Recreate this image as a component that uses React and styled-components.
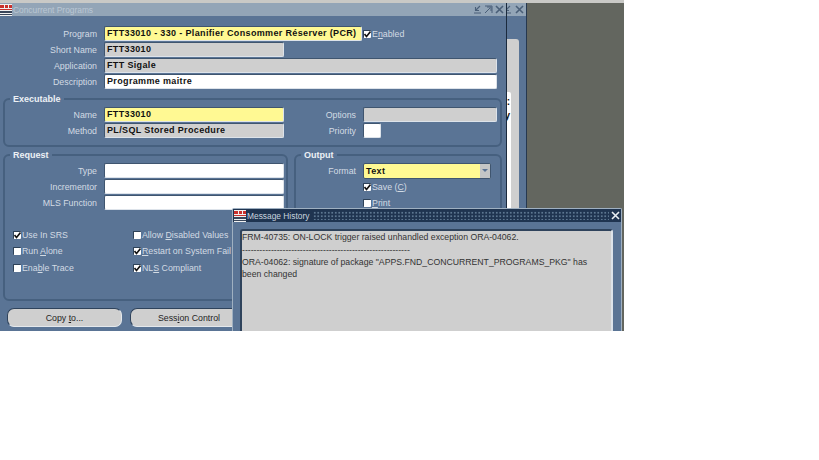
import React from 'react';
import styled, { createGlobalStyle } from 'styled-components';

const GlobalStyle = createGlobalStyle`
html, body {
  margin: 0;
  background: #FFFFFF;
}
`;

const Desktop = styled.div`
position: relative;
width: 624px;
height: 331px;
overflow: hidden;
background: #63665F;
border-top: 3px solid #C9C9C6;
box-sizing: border-box;
font-family: "Liberation Sans", Arial, sans-serif;
font-size: 8.8px;
`;

const BackWindow = styled.div`
position: absolute;
left: 0;
top: 0;
width: 527px;
height: 328px;
background: #5A7495;
border-right: 1px solid #26384F;
box-sizing: border-box;
`;

const BackTitle = styled.div`
height: 13px;
background: #93A5B7;
display: flex;
justify-content: flex-end;
align-items: center;
gap: 3px;
padding-right: 2px;
`;

const BackPanel = styled.div`
position: absolute;
left: 495px;
top: 36px;
width: 24px;
height: 292px;
background: #CFCFCF;
border-radius: 3px 3px 0 0;
`;

const BackSheet = styled.div`
position: absolute;
left: 495px;
top: 89px;
width: 16px;
height: 239px;
box-sizing: border-box;
padding: 3px 1px 0 0;
background: #FFFFFF;
border-radius: 2px;
color: #111111;
font-weight: bold;
font-size: 10px;
line-height: 14px;
text-align: right;
`;

const Window = styled.div`
position: absolute;
left: 0;
top: 0;
width: 507px;
height: 328px;
background: #5A7495;
border-right: 1px solid #1B2A3D;
box-sizing: border-box;
`;

const TitleBar = styled.div`
height: 13px;
background: #93A5B7;
display: flex;
align-items: center;
`;

const TitleText = styled.span`
color: #BAC7D4;
font-size: 8.4px;
margin-left: 1px;
flex: 1;
`;

const Controls = styled.div`
display: flex;
align-items: center;
gap: 2px;
margin-right: 2px;
`;

const Form = styled.div`
padding: 10px 4px 0 3px;
`;

const TopGrid = styled.div`
display: grid;
grid-template-columns: 101px 258px 1fr;
row-gap: 1px;
align-items: center;
padding-right: 5px;
`;

const Label = styled.label`
color: #D3DBE4;
font-size: 8.8px;
text-align: right;
padding-right: 7px;
white-space: nowrap;
width: ${props => props.$width || 'auto'};
flex: none;
`;

const fieldColors = {
  yellow: '#FFF993',
  gray: '#CFCFCF',
  white: '#FFFFFF',
};

const Field = styled.div`
height: 15px;
box-sizing: border-box;
width: ${props => props.$width || '100%'};
grid-column: ${props => props.$span || 'auto'};
background: ${props => fieldColors[props.$kind || 'white']};
border-radius: 2px;
border-top: 1px solid #3F556F;
border-left: 1px solid #3F556F;
border-bottom: 1px solid #DDE3EA;
border-right: 1px solid #DDE3EA;
color: #111111;
font-weight: bold;
font-size: 9px;
line-height: 13px;
padding-left: 2px;
letter-spacing: 0.35px;
white-space: nowrap;
overflow: hidden;
`;

const Group = styled.fieldset`
margin: ${props => props.$top || 0}px 0 0 0;
padding: 0;
min-width: 0;
height: ${props => props.$height}px;
width: ${props => props.$width || 'auto'};
box-sizing: border-box;
border: 2px solid #46607F;
border-radius: 6px;
`;

const GroupTitle = styled.legend`
color: #EDF1F5;
font-weight: bold;
font-size: 9px;
padding: 0 3px;
margin-left: 5px;
line-height: 12px;
`;

const ExecGrid = styled.div`
display: grid;
grid-template-columns: 99px 180px 1fr 134px;
row-gap: 1px;
padding: 2px 3px 0 0;
align-items: center;
`;

const LowerRow = styled.div`
display: flex;
gap: 6px;
margin-top: 2px;
`;

const RequestGrid = styled.div`
display: grid;
grid-template-columns: 99px 180px;
row-gap: 1px;
padding-top: 2px;
align-items: center;
`;

const Checks = styled.div`
display: grid;
grid-template-columns: 120px 1fr;
row-gap: 3px;
padding: 18px 0 0 8px;
`;

const CheckRow = styled.div`
display: flex;
align-items: center;
gap: 1px;
height: 13.5px;
color: #D3DBE4;
font-size: 8.8px;
white-space: nowrap;
margin-left: ${props => props.$indent || 0}px;
margin-top: ${props => props.$top || 0}px;
`;

const Box = styled.span`
display: inline-flex;
width: 7px;
height: 7px;
background: #FFFFFF;
border-radius: 1px;
border-top: 1px solid #2E4258;
border-left: 1px solid #2E4258;
flex: none;
`;

const Key = styled.span`
text-decoration: underline;
`;

const OutputRow = styled.div`
display: flex;
align-items: center;
padding-top: 2px;
`;

const Select = styled(Field)`
position: relative;
width: 128px;
height: 16px;
line-height: 15px;
border: 1px solid #3F556F;
`;

const SelectArrow = styled.span`
position: absolute;
right: 0;
top: 0;
bottom: 0;
width: 10px;
background: #C4C6C6;
&::after {
  content: '';
  position: absolute;
  left: 2px;
  top: 5px;
  border-left: 3px solid transparent;
  border-right: 3px solid transparent;
  border-top: 3px solid #5A7495;
}
`;

const Buttons = styled.div`
display: flex;
gap: 8px;
padding: 7px 0 0 4px;
`;

const Button = styled.button`
width: ${props => props.$width}px;
height: 19px;
flex: none;
padding: 0;
background: #CFCFCF;
color: #1E1E1E;
font-family: inherit;
font-size: 8.8px;
border: 1px solid #2F435C;
border-right-color: #E4E8EC;
border-bottom-color: #E4E8EC;
border-radius: 7px;
`;

const Dialog = styled.div`
position: absolute;
left: 232px;
top: 205px;
width: 390px;
height: 130px;
box-sizing: border-box;
background: #5A7495;
border: 1px solid #9FB0C1;
border-bottom: none;
border-radius: 2px 2px 0 0;
`;

const DialogTitle = styled.div`
height: 13px;
background: #1F3450;
display: flex;
align-items: center;
padding: 0 1px 0 1px;
color: #C9D4DF;
`;

const DialogName = styled.span`
font-size: 8.4px;
margin-left: 1px;
`;

const Dots = styled.div`
flex: 1;
height: 9px;
margin: 0 2px 0 4px;
background-image: radial-gradient(#5C7690 0.8px, transparent 1px);
background-size: 3.5px 3.5px;
`;

const MessageBox = styled.div`
margin: 7px 8px 0 7px;
height: 110px;
box-sizing: border-box;
background: #CFCFCF;
border-top: 2px solid #2F435C;
border-left: 2px solid #2F435C;
border-right: 2px solid #DDE3EA;
border-radius: 3px 3px 0 0;
color: #333333;
font-size: 8.7px;
line-height: 12px;
`;

const MessageLine = styled.div`
white-space: pre;
margin-bottom: ${props => props.$gap || 0}px;
`;

const LogoMark = styled.svg`
flex: none;
`;

const ICON_COLOR = '#4A5F78';

const Logo = () => (
  <LogoMark width="12" height="12" viewBox="0 0 12 12">
    <rect width="12" height="12" fill="#F1F1F1" />
    <rect y="1" width="12" height="3" fill="#C9302C" />
    <rect x="4" y="1" width="1" height="3" fill="#F1F1F1" />
    <rect x="8" y="1" width="1" height="3" fill="#F1F1F1" />
    <rect y="5" width="12" height="1" fill="#C9302C" />
    <rect y="7" width="12" height="2" fill="#39465A" />
    <rect y="10" width="12" height="1" fill="#39465A" />
  </LogoMark>
);

const Minimize = () => (
  <svg width="9" height="9" viewBox="0 0 9 9">
    <path d="M7 1L3 5M2.5 2V5.5H6M1 8H8" stroke={ICON_COLOR} strokeWidth="1.1" fill="none" />
  </svg>
);

const Maximize = () => (
  <svg width="9" height="9" viewBox="0 0 9 9">
    <path d="M1 8L6 3M3 2H7V6M1 1H8V8" stroke={ICON_COLOR} strokeWidth="1" fill="none" />
  </svg>
);

const Close = ({ color = ICON_COLOR }) => (
  <svg width="9" height="9" viewBox="0 0 9 9">
    <path d="M1 1L8 8M8 1L1 8" stroke={color} strokeWidth="1.6" fill="none" />
  </svg>
);

const Check = ({ on, children, ...rest }) => (
  <CheckRow {...rest}>
    <Box>
      {on && (
        <svg width="7" height="7" viewBox="0 0 7 7">
          <path d="M0.5 3L2.5 5.5L6.5 0.5" stroke="#111" strokeWidth="1.6" fill="none" />
        </svg>
      )}
    </Box>
    <span>{children}</span>
  </CheckRow>
);

const App = () => {
  return (
    <>
      <GlobalStyle />
      <Desktop>
        <BackWindow>
          <BackTitle>
            <Minimize />
            <Close />
          </BackTitle>
          <BackPanel />
          <BackSheet>:<br />y</BackSheet>
        </BackWindow>
        <Window>
          <TitleBar>
            <Logo />
            <TitleText>Concurrent Programs</TitleText>
            <Controls>
              <Minimize />
              <Maximize />
              <Close />
            </Controls>
          </TitleBar>
          <Form>
            <TopGrid>
              <Label>Program</Label>
              <Field $kind='yellow'>FTT33010 - 330 - Planifier Consommer Réserver (PCR)</Field>
              <Check on $indent={1}>E<Key>n</Key>abled</Check>
              <Label>Short Name</Label>
              <Field $kind='gray' $width='180px' $span='2 / 4'>FTT33010</Field>
              <Label>Application</Label>
              <Field $kind='gray' $span='2 / 4'>FTT Sigale</Field>
              <Label>Description</Label>
              <Field $span='2 / 4'>Programme maitre</Field>
            </TopGrid>
            <Group $top={4} $height={54}>
              <GroupTitle>Executable</GroupTitle>
              <ExecGrid>
                <Label>Name</Label>
                <Field $kind='yellow'>FTT33010</Field>
                <Label>Options</Label>
                <Field $kind='gray' />
                <Label>Method</Label>
                <Field $kind='gray'>PL/SQL Stored Procedure</Field>
                <Label>Priority</Label>
                <Field $width='18px' />
              </ExecGrid>
            </Group>
            <LowerRow>
              <Group $height={152} $width='285px'>
                <GroupTitle>Request</GroupTitle>
                <RequestGrid>
                  <Label>Type</Label>
                  <Field />
                  <Label>Incrementor</Label>
                  <Field />
                  <Label>MLS Function</Label>
                  <Field />
                </RequestGrid>
                <Checks>
                  <Check on>Use In SRS</Check>
                  <Check>Allow <Key>D</Key>isabled Values</Check>
                  <Check>Run <Key>A</Key>lone</Check>
                  <Check on><Key>R</Key>estart on System Fail</Check>
                  <Check>Ena<Key>b</Key>le Trace</Check>
                  <Check on>NL<Key>S</Key> Compliant</Check>
                </Checks>
              </Group>
              <Group $height={152} $width='208px'>
                <GroupTitle>Output</GroupTitle>
                <OutputRow>
                  <Label $width='60px'>Format</Label>
                  <Select $kind='yellow'>
                    Text
                    <SelectArrow />
                  </Select>
                </OutputRow>
                <Check on $indent={67} $top={1.5}>Save (<Key>C</Key>)</Check>
                <Check $indent={67} $top={2.5}><Key>P</Key>rint</Check>
              </Group>
            </LowerRow>
            <Buttons>
              <Button $width={115}>Copy <Key>t</Key>o...</Button>
              <Button $width={118}>Sess<Key>i</Key>on Control</Button>
            </Buttons>
          </Form>
        </Window>
        <Dialog>
          <DialogTitle>
            <Logo />
            <DialogName>Message History</DialogName>
            <Dots />
            <Close color='#E8EDF2' />
          </DialogTitle>
          <MessageBox>
            <MessageLine $gap={1}>FRM-40735: ON-LOCK trigger raised unhandled exception ORA-04062.</MessageLine>
            <MessageLine>{'-'.repeat(58)}</MessageLine>
            <MessageLine>ORA-04062: signature of package "APPS.FND_CONCURRENT_PROGRAMS_PKG" has</MessageLine>
            <MessageLine>been changed</MessageLine>
          </MessageBox>
        </Dialog>
      </Desktop>
    </>
  );
};

export default App;
